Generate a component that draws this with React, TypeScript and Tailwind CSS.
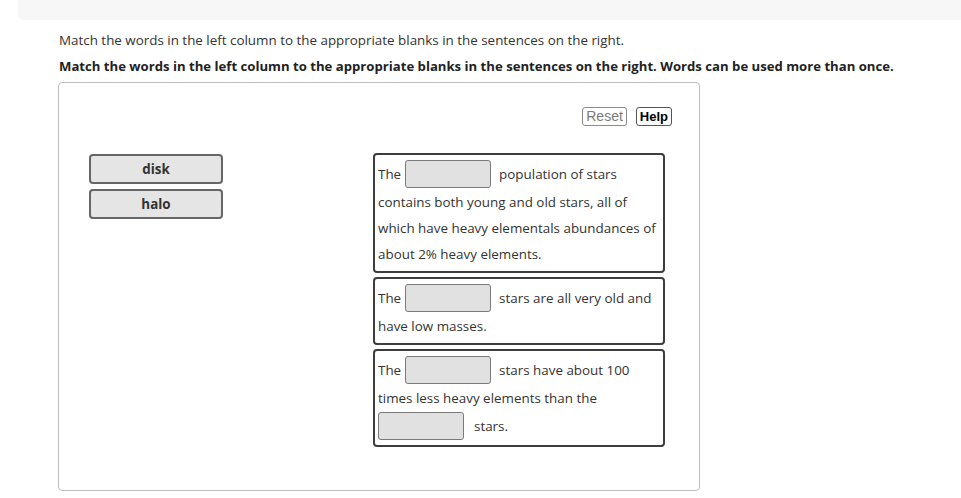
import type { ReactNode } from 'react';

const font = { fontFamily: '"Open Sans", "Noto Sans", sans-serif' };

function Blank({ first = false }: { first?: boolean }) {
  return (
    <span
      className={`my-px inline-block h-[28px] w-[86px] rounded-[3px] border border-[#7a7a7a] bg-[#e1e1e2] align-[-10px] ${first ? 'mr-2.5' : 'ml-[4px] mr-2'}`}
    />
  );
}

function Sentence({ children }: { children: ReactNode }) {
  return (
    <div className="w-[292px] rounded-[4px] border-2 border-[#3d3d3d] px-[3px] py-[4px] text-[13.4px] leading-[26px] text-[#333]">
      {children}
    </div>
  );
}

function Word({ label }: { label: string }) {
  return (
    <div className="flex h-[30px] w-[134px] items-center justify-center rounded-[4px] border-2 border-[#666] bg-[#e5e5e5] text-[13.4px] font-bold text-[#333]">
      {label}
    </div>
  );
}

export default function App() {
  return (
    <div className="h-[498px] w-[961px] bg-white" style={font}>
      <div className="ml-[18px] h-5 rounded-bl-md bg-[#f7f7f7]" />
      <div className="pl-[59px] pt-[11px]">
        <p className="text-[13.4px] leading-[18px] text-[#333]">
          Match the words in the left column to the appropriate blanks in the sentences on the right.
        </p>
        <p className="mt-2 text-[13.15px] font-bold leading-[18px] text-[#222]">
          Match the words in the left column to the appropriate blanks in the sentences on the right. Words can be used more than once.
        </p>
      </div>
      <div className="ml-[58px] mt-[7px] h-[409px] w-[642px] rounded-[4px] border border-[#bdbdbd] bg-white">
        <div className="flex justify-end gap-[9px] pr-[27px] pt-[24px]" style={{ fontFamily: '"Liberation Sans", Arial, sans-serif' }}>
          <button className="h-[19px] rounded-[3px] border border-[#8a8a8a] bg-white px-[3px] text-[14px] leading-[17px] text-[#7a7a7a]">
            Reset
          </button>
          <button className="h-[19px] rounded-[3px] border border-[#555] bg-white px-[3px] text-[13px] font-bold leading-[17px] text-black">
            Help
          </button>
        </div>
        <div className="mt-[27px] flex">
          <div className="ml-[30px] mt-px flex flex-col gap-[5px]">
            <Word label="disk" />
            <Word label="halo" />
          </div>
          <div className="ml-[150px] flex flex-col gap-[4px]">
            <Sentence>
              <span>The</span>
              <Blank />
              population of stars contains both young and old stars, all of which have heavy elementals abundances of about 2% heavy elements.
            </Sentence>
            <Sentence>
              <span>The</span>
              <Blank />
              stars are all very old and have low masses.
            </Sentence>
            <Sentence>
              <span>The</span>
              <Blank />
              stars have about 100 times less heavy elements than the <Blank first />
              stars.
            </Sentence>
          </div>
        </div>
      </div>
    </div>
  );
}
